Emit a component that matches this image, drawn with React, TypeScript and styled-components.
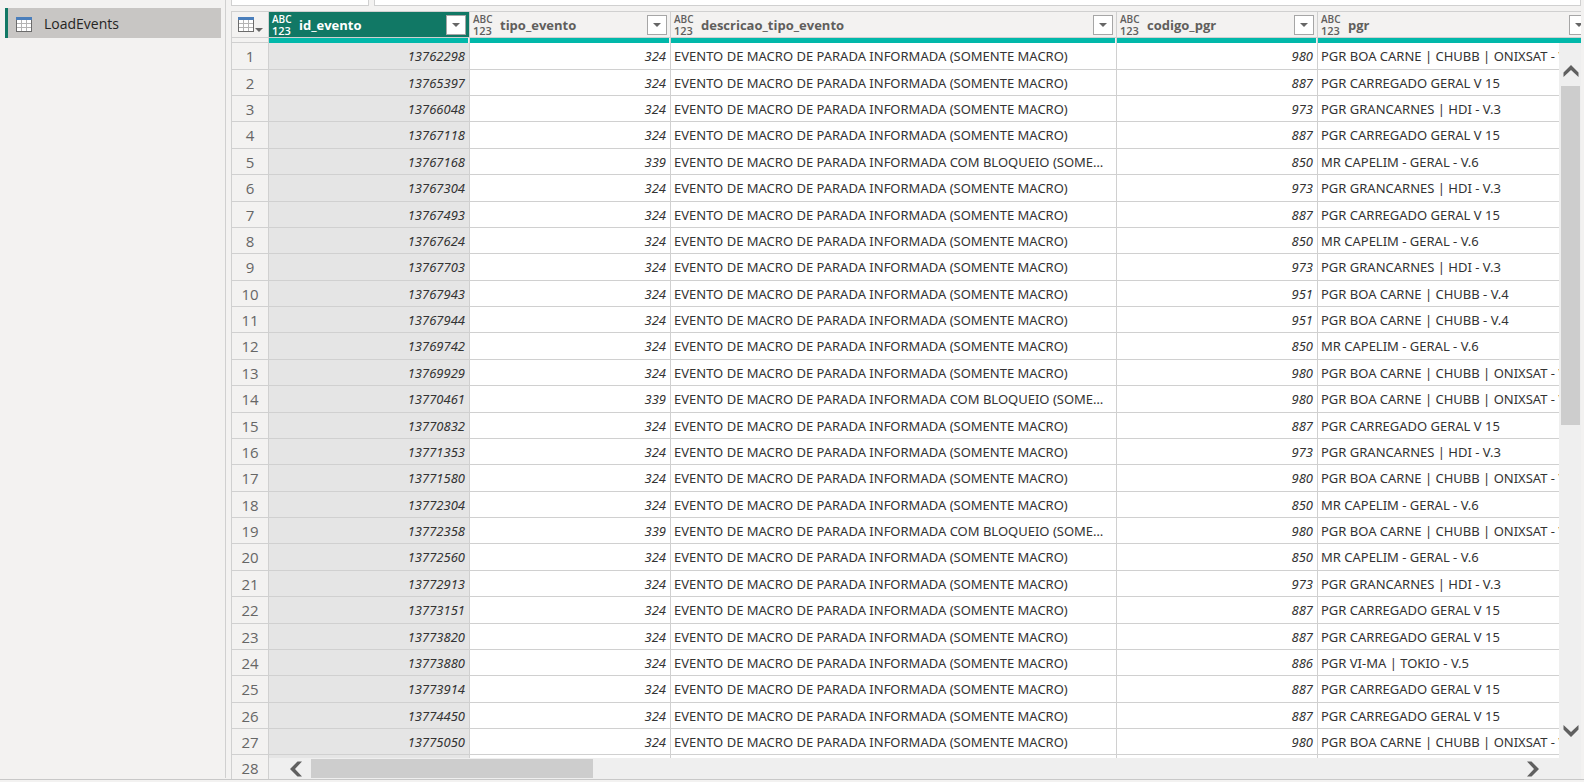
import React from "react";
import styled, { createGlobalStyle } from "styled-components";

const Global = createGlobalStyle`
  * { box-sizing: border-box; }
  body {
    margin: 0;
    background: #f3f2f1;
    color: #333;
    font-family: "Noto Sans", "Open Sans", sans-serif;
  }
  button { font: inherit; color: inherit; }
`;

const line = "#d0d0d0";

const Shell = styled.div`
  display: flex;
  height: 100vh;
  overflow: hidden;
  padding-bottom: 2px;
`;

const Workspace = styled.div`
  display: flex;
  flex: 1;
  min-width: 0;
  border-bottom: 1px solid #c8c8c8;
`;

const QueryPane = styled.nav`
  flex: none;
  width: 226px;
  margin-bottom: 1px;
  padding: 8px 4px 0 5px;
  border-right: 1px solid ${line};
`;

const QueryItem = styled.button`
  display: flex;
  align-items: center;
  gap: 12px;
  width: 100%;
  height: 30px;
  padding: 2px 8px 0;
  border: 0;
  border-left: 3px solid #117865;
  background: #c8c6c4;
  color: #252423;
  font-family: "Open Sans", sans-serif;
  font-size: 14px;
  line-height: 20px;
  text-align: left;
`;

const Main = styled.main`
  display: flex;
  flex-direction: column;
  flex: 1;
  min-width: 0;
  padding: 0 3px 0 5px;
`;

const FormulaBar = styled.div`
  display: flex;
  gap: 5px;
  height: 6px;
  flex: none;
`;

const FormulaTools = styled.div`
  width: 138px;
  border: 1px solid ${line};
  border-top: 0;
  background: #fff;
`;

const FormulaField = styled(FormulaTools)`
  flex: 1;
`;

const GridFrame = styled.section`
  position: relative;
  flex: 1;
  min-height: 0;
  margin-top: 5px;
  overflow: hidden;
  border: 1px solid ${line};
  border-width: 1px 0 0 1px;
`;

const Table = styled.table`
  width: 1361px;
  table-layout: fixed;
  border-collapse: separate;
  border-spacing: 0;
`;

const Col = styled.col<{ $w: number }>`
  width: ${(p) => p.$w}px;
`;

const HeadCell = styled.th<{ $selected?: boolean }>`
  height: 26px;
  padding: 0 3px;
  border-right: 1px solid ${line};
  border-bottom: 1px solid ${line};
  background: ${(p) => (p.$selected ? "#117865" : "#f3f2f1")};
  color: ${(p) => (p.$selected ? "#fff" : "#605e5c")};
  font-weight: 400;
  text-align: left;
`;

const HeadContent = styled.div`
  display: flex;
  align-items: center;
  height: 25px;
`;

const TypeButton = styled.button`
  display: flex;
  flex-direction: column;
  width: 20px;
  margin-right: 7px;
  padding: 0;
  border: 0;
  background: none;
  font-family: "Open Sans", sans-serif;
  font-size: 10px;
  font-weight: 600;
  line-height: 11px;
  text-align: left;
`;

const TypeDigits = styled.span`
  font-size: 11px;
  line-height: 11px;
`;

const ColumnName = styled.span`
  flex: 1;
  font-family: "Open Sans", sans-serif;
  font-size: 13px;
  font-weight: 700;
  line-height: 20px;
`;

const FilterButton = styled.button`
  display: flex;
  align-items: center;
  justify-content: center;
  width: 20px;
  height: 20px;
  padding: 0;
  border: 1px solid #a6a6a6;
  background: #fff;
  color: #666;
`;

const CornerCell = styled.th`
  height: 26px;
  padding: 0 0 0 6px;
  border-right: 1px solid ${line};
  border-bottom: 1px solid ${line};
`;

const CornerButton = styled.button`
  display: flex;
  align-items: flex-end;
  gap: 1px;
  padding: 0;
  border: 0;
  background: none;
  color: #666;
`;

const QualitySpacer = styled.td`
  height: 5px;
  padding: 0;
  border-right: 1px solid ${line};
  border-bottom: 1px solid ${line};
`;

const QualityCell = styled.td`
  height: 5px;
  padding: 0 1px 0 0;
  border-right: 1px solid ${line};
`;

const QualityBar = styled.div`
  height: 5px;
  background: #01b8aa;
`;

const Row = styled.tr`
  height: 26px;
  &:nth-child(8n + 1),
  &:nth-child(8n + 4),
  &:nth-child(8n + 6) {
    height: 27px;
  }
`;

const RowNumber = styled.th`
  padding: 0;
  border-right: 1px solid ${line};
  border-bottom: 1px solid ${line};
  color: #666;
  font-family: "Open Sans", sans-serif;
  font-size: 15px;
  font-weight: 400;
  line-height: 20px;
  text-align: center;
`;

const Cell = styled.td<{ $numeric?: boolean; $selected?: boolean }>`
  overflow: hidden;
  padding: 0 4px 0 3px;
  border-right: 1px solid ${line};
  border-bottom: 1px solid ${line};
  background: ${(p) => (p.$selected ? "#e5e5e5" : "#fff")};
  font-size: 13px;
  font-style: ${(p) => (p.$numeric ? "italic" : "normal")};
  line-height: 20px;
  text-align: ${(p) => (p.$numeric ? "right" : "left")};
  text-overflow: ellipsis;
  white-space: nowrap;
`;

const VerticalBar = styled.div`
  position: absolute;
  top: 31px;
  right: 0;
  bottom: 0;
  display: flex;
  flex-direction: column;
  align-items: flex-end;
  gap: 1px;
  width: 22px;
  padding: 14px 1px 34px 0;
  background: #efefef;
`;

const HorizontalBar = styled.div`
  position: absolute;
  left: 37px;
  right: 0;
  bottom: 0;
  display: flex;
  align-items: center;
  gap: 1px;
  height: 21px;
  padding: 0 34px 0 13px;
  background: #efefef;
`;

const ScrollButton = styled.button`
  display: flex;
  align-items: center;
  justify-content: center;
  flex: none;
  width: 19px;
  height: 28px;
  padding: 0;
  border: 0;
  background: none;
  color: #606060;
`;

const SideScrollButton = styled(ScrollButton)`
  width: 28px;
  height: 19px;
`;

const Track = styled.div<{ $share: number }>`
  flex: ${(p) => p.$share};
`;

const VerticalThumb = styled.div<{ $share: number }>`
  flex: ${(p) => p.$share};
  width: 19px;
  background: #cdcdcd;
`;

const HorizontalThumb = styled.div<{ $share: number }>`
  flex: ${(p) => p.$share};
  height: 19px;
  background: #cdcdcd;
`;

const TableIcon = () => (
  <svg width="16" height="15" viewBox="0 0 16 15" aria-hidden="true">
    <rect x="0.5" y="0.5" width="15" height="14" fill="#fff" stroke="#6b6b6b" />
    <path d="M5.500 3v11M10.500 3v11M1 6.500h14M1 10.500h14" stroke="#b4b4b4" fill="none" />
    <rect width="16" height="3" fill="#4a7ebb" />
  </svg>
);

const Caret = () => (
  <svg width="8" height="4" viewBox="0 0 8 4" aria-hidden="true">
    <path d="M0 0h8l-4 4z" fill="currentColor" />
  </svg>
);

const turns = { up: 0, right: 90, down: 180, left: 270 };

const Chevron = ({ to }: { to: keyof typeof turns }) => (
  <svg width="16" height="16" viewBox="0 0 16 16" aria-hidden="true">
    <path
      d="M8 2l7.500 7.500v4.500L8 7 .5 14V9.500z"
      fill="currentColor"
      transform={`rotate(${turns[to]} 8 8)`}
    />
  </svg>
);

const columns = [
  { name: "id_evento", width: 201 },
  { name: "tipo_evento", width: 201 },
  { name: "descricao_tipo_evento", width: 446 },
  { name: "codigo_pgr", width: 201 },
  { name: "pgr", width: 275 },
];

const stop = "EVENTO DE MACRO DE PARADA INFORMADA (SOMENTE MACRO)";
const stopLocked = "EVENTO DE MACRO DE PARADA INFORMADA COM BLOQUEIO (SOMENTE MACRO)";
const boaOnix = "PGR BOA CARNE | CHUBB | ONIXSAT - V.4";
const boa = "PGR BOA CARNE | CHUBB - V.4";
const geral = "PGR CARREGADO GERAL V 15";
const gran = "PGR GRANCARNES | HDI - V.3";
const capelim = "MR CAPELIM - GERAL - V.6";
const vima = "PGR VI-MA | TOKIO - V.5";

const events: [number, number, number, string][] = [
  [13762298, 324, 980, boaOnix],
  [13765397, 324, 887, geral],
  [13766048, 324, 973, gran],
  [13767118, 324, 887, geral],
  [13767168, 339, 850, capelim],
  [13767304, 324, 973, gran],
  [13767493, 324, 887, geral],
  [13767624, 324, 850, capelim],
  [13767703, 324, 973, gran],
  [13767943, 324, 951, boa],
  [13767944, 324, 951, boa],
  [13769742, 324, 850, capelim],
  [13769929, 324, 980, boaOnix],
  [13770461, 339, 980, boaOnix],
  [13770832, 324, 887, geral],
  [13771353, 324, 973, gran],
  [13771580, 324, 980, boaOnix],
  [13772304, 324, 850, capelim],
  [13772358, 339, 980, boaOnix],
  [13772560, 324, 850, capelim],
  [13772913, 324, 973, gran],
  [13773151, 324, 887, geral],
  [13773820, 324, 887, geral],
  [13773880, 324, 886, vima],
  [13773914, 324, 887, geral],
  [13774450, 324, 887, geral],
  [13775050, 324, 980, boaOnix],
];

export default function App() {
  return (
    <Shell>
      <Global />
      <Workspace>
        <QueryPane aria-label="Queries">
          <QueryItem type="button">
            <TableIcon />
            LoadEvents
          </QueryItem>
        </QueryPane>
        <Main>
          <FormulaBar>
            <FormulaTools />
            <FormulaField />
          </FormulaBar>
          <GridFrame>
            <Table>
              <colgroup>
                <Col $w={37} />
                {columns.map((c) => (
                  <Col key={c.name} $w={c.width} />
                ))}
              </colgroup>
              <thead>
                <tr>
                  <CornerCell>
                    <CornerButton type="button" aria-label="Table options">
                      <TableIcon />
                      <Caret />
                    </CornerButton>
                  </CornerCell>
                  {columns.map((c, i) => (
                    <HeadCell key={c.name} scope="col" $selected={i === 0}>
                      <HeadContent>
                        <TypeButton type="button">
                          ABC<TypeDigits>123</TypeDigits>
                        </TypeButton>
                        <ColumnName>{c.name}</ColumnName>
                        <FilterButton type="button" aria-label={`Filter ${c.name}`}>
                          <Caret />
                        </FilterButton>
                      </HeadContent>
                    </HeadCell>
                  ))}
                </tr>
                <tr>
                  <QualitySpacer />
                  {columns.map((c) => (
                    <QualityCell key={c.name}>
                      <QualityBar />
                    </QualityCell>
                  ))}
                </tr>
              </thead>
              <tbody>
                {events.map(([id, type, code, pgr], i) => (
                  <Row key={id}>
                    <RowNumber scope="row">{i + 1}</RowNumber>
                    <Cell $numeric $selected>{id}</Cell>
                    <Cell $numeric>{type}</Cell>
                    <Cell>{type === 339 ? stopLocked : stop}</Cell>
                    <Cell $numeric>{code}</Cell>
                    <Cell>{pgr}</Cell>
                  </Row>
                ))}
                <Row>
                  <RowNumber scope="row">{events.length + 1}</RowNumber>
                  <Cell $selected />
                  <Cell />
                  <Cell />
                  <Cell />
                  <Cell />
                </Row>
              </tbody>
            </Table>
            <VerticalBar>
              <ScrollButton type="button" aria-label="Scroll up">
                <Chevron to="up" />
              </ScrollButton>
              <VerticalThumb $share={340} />
              <Track $share={290} />
              <ScrollButton type="button" aria-label="Scroll down">
                <Chevron to="down" />
              </ScrollButton>
            </VerticalBar>
            <HorizontalBar>
              <SideScrollButton type="button" aria-label="Scroll left">
                <Chevron to="left" />
              </SideScrollButton>
              <HorizontalThumb $share={282} />
              <Track $share={922} />
              <SideScrollButton type="button" aria-label="Scroll right">
                <Chevron to="right" />
              </SideScrollButton>
            </HorizontalBar>
          </GridFrame>
        </Main>
      </Workspace>
    </Shell>
  );
}
